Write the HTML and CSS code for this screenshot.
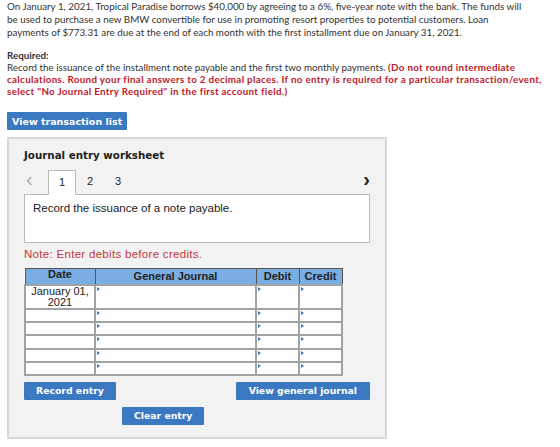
FILE: index.html
```html
<!DOCTYPE html>
<html lang="en">
  <head>
    <meta charset="UTF-8" />
    <meta name="viewport" content="width=device-width, initial-scale=1.0" />
    <title>Journal entry worksheet</title>
    <link rel="stylesheet" href="styles.css">
  </head>
  <body>
    <p class="intro">
      On January 1, 2021, Tropical Paradise borrows $40,000 by agreeing to a 6%, five-year note with the bank. The funds will<br />
      be used to purchase a new BMW convertible for use in promoting resort properties to potential customers. Loan<br />
      payments of $773.31 are due at the end of each month with the first installment due on January 31, 2021.
    </p>

    <p class="required">
      <b>Required:</b><br />
      Record the issuance of the installment note payable and the first two monthly payments. <span class="warn">(Do not round intermediate<br />
      calculations. Round your final answers to 2 decimal places. If no entry is required for a particular transaction/event,<br />
      select "No Journal Entry Required" in the first account field.)</span>
    </p>

    <button class="btn btn-list">View transaction list</button>

    <div class="worksheet">
      <h2>Journal entry worksheet</h2>

      <div class="tabs">
        <span class="arrow">&lsaquo;</span>
        <span class="tab active">1</span>
        <span class="tab">2</span>
        <span class="tab">3</span>
        <span class="arrow next">&rsaquo;</span>
      </div>
      <div class="tab-body">Record the issuance of a note payable.</div>

      <p class="note">Note: Enter debits before credits.</p>

      <table class="journal">
        <thead>
          <tr>
            <th class="c-date">Date</th>
            <th class="c-acct">General Journal</th>
            <th class="c-num">Debit</th>
            <th class="c-num">Credit</th>
          </tr>
        </thead>
        <tbody>
          <tr class="first">
            <td class="c-date">January 01,<br />2021</td>
            <td class="mark"></td>
            <td class="mark"></td>
            <td class="mark"></td>
          </tr>
          <tr><td></td><td class="mark"></td><td class="mark"></td><td class="mark"></td></tr>
          <tr><td></td><td class="mark"></td><td class="mark"></td><td class="mark"></td></tr>
          <tr><td></td><td class="mark"></td><td class="mark"></td><td class="mark"></td></tr>
          <tr><td></td><td class="mark"></td><td class="mark"></td><td class="mark"></td></tr>
          <tr><td></td><td class="mark"></td><td class="mark"></td><td class="mark"></td></tr>
        </tbody>
      </table>

      <div class="actions">
        <button class="btn">Record entry</button>
        <button class="btn btn-wide">View general journal</button>
      </div>
      <div class="actions second">
        <button class="btn">Clear entry</button>
      </div>
    </div>
  </body>
</html>
```

FILE: styles.css
```css
body {
  margin: 0;
  padding: 0 7px;
  font-family: Lato, "Open Sans", sans-serif;
  font-size: 9.8px;
  color: #333;
  background: #fff;
}

.intro,
.required {
  margin: 0;
  white-space: nowrap;
}

.intro {
  line-height: 13px;
}

.required {
  margin-top: 10px;
  line-height: 12px;
}

.required b {
  font-weight: bold;
}

.warn {
  color: #c0192b;
  font-weight: bold;
  letter-spacing: 0.32px;
}

.btn {
  background-color: #3b78c2;
  color: #fff;
  border: none;
  border-radius: 1px;
  font-family: "DejaVu Sans", Verdana, sans-serif;
  font-weight: bold;
  font-size: 9.3px;
  height: 18px;
  padding: 0 12px;
  cursor: pointer;
}

.btn-wide {
  padding: 0 13px;
}

.btn-list {
  display: block;
  margin-top: 15px;
  padding: 0 5px;
  font-size: 9.5px;
}

.worksheet {
  margin-top: 7px;
  width: 380px;
  height: 302px;
  box-sizing: border-box;
  background: #f2f2f2;
  border: 2px solid #d8d8d8;
  padding: 0 15px;
  font-family: "Liberation Sans", Arial, sans-serif;
}

.worksheet h2 {
  margin: 10px 0 0;
  font-family: "DejaVu Sans", Verdana, sans-serif;
  font-size: 10.3px;
  font-weight: bold;
  color: #222;
}

.tabs {
  display: flex;
  align-items: flex-end;
  margin-top: 8px;
  height: 25px;
}

.arrow {
  font-size: 20px;
  line-height: 20px;
  color: #aaa;
  width: 22px;
  padding-left: 2px;
  align-self: flex-start;
}

.arrow.next {
  margin-left: auto;
  color: #222;
  width: auto;
  font-weight: bold;
}

.tab {
  width: 28px;
  height: 24px;
  line-height: 22px;
  text-align: center;
  font-size: 11px;
  color: #222;
  box-sizing: border-box;
}

.tab.active {
  background: #fff;
  border: 1px solid #bbb;
  border-bottom: none;
  margin-bottom: -1px;
  height: 25px;
  position: relative;
}

.tab-body {
  background: #fff;
  border: 1px solid #bbb;
  height: 49px;
  padding: 7px 8px 0;
  box-sizing: border-box;
  font-size: 11.5px;
  color: #222;
}

.note {
  margin: 4px 0 0;
  color: #c2373a;
  font-size: 11.5px;
  letter-spacing: 0.3px;
  line-height: 14px;
}

.journal {
  margin-top: 7px;
  width: 319px;
  border-collapse: collapse;
  background: #fff;
  font-size: 11px;
  color: #222;
}

.journal th {
  background: #7aaee2;
  border: 1px solid #555;
  height: 15px;
  padding: 0;
  font-weight: bold;
  line-height: 13px;
}

.journal td {
  border: 2px solid #a2a2a2;
  padding: 0;
  position: relative;
}

.journal tbody tr {
  height: 13.2px;
}

.journal tbody tr.first {
  height: 23px;
}

.journal .c-date {
  width: 68px;
  text-align: center;
  line-height: 11px;
  vertical-align: top;
}

.journal .c-num {
  width: 42px;
}

.journal td.mark::before {
  content: "";
  position: absolute;
  left: 1px;
  top: 1px;
  border-left: 3px solid #3b78c2;
  border-top: 2px solid transparent;
  border-bottom: 2px solid transparent;
}

.actions {
  display: flex;
  justify-content: space-between;
  margin-top: 6px;
}

.actions.second {
  justify-content: flex-start;
  margin-top: 7px;
  padding-left: 98px;
}
```
